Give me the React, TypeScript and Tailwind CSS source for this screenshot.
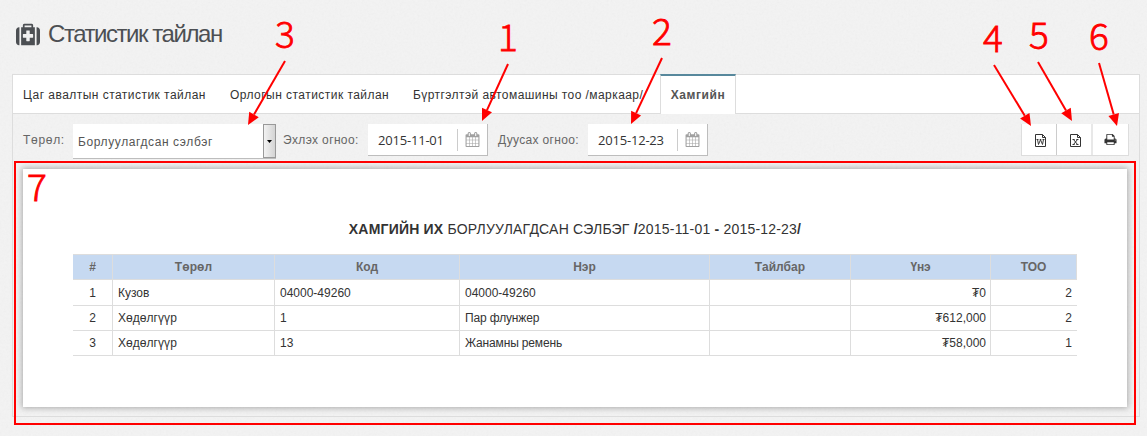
import React from 'react';

const ARIAL = "font-['Liberation_Sans',Arial,sans-serif]";
const OPEN = "font-['Open_Sans',sans-serif]";

function MedkitIcon() {
  return (
    <svg viewBox="0 0 1792 1792" preserveAspectRatio="none" className="h-[25px] w-[24px]" fill="#4c4f53" fillRule="evenodd">
      <path d="M1280 1088v-192q0-14-9-23t-23-9h-224v-224q0-14-9-23t-23-9h-192q-14 0-23 9t-9 23v224h-224q-14 0-23 9t-9 23v192q0 14 9 23t23 9h224v224q0 14 9 23t23 9h192q14 0 23-9t9-23v-224h224q14 0 23-9t9-23zm-640-704h512v-128h-512v128zm-384 0v1280h-32q-92 0-158-66t-66-158v-832q0-92 66-158t158-66h32zm1152 0v1280h-1024v-1280h128v-160q0-40 28-68t68-28h576q40 0 68 28t28 68v160h128zm384 224v832q0 92-66 158t-158 66h-32v-1280h32q92 0 158 66t66 158z" />
    </svg>
  );
}

function CalendarIcon() {
  return (
    <svg viewBox="0 0 1792 1792" className="h-[15px] w-[15px]" fill="#a1a1a1">
      <path d="M192 1664h288v-288h-288v288zM544 1664h320v-288h-320v288zM192 1312h288v-320h-288v320zM544 1312h320v-320h-320v320zM192 928h288v-288h-288v288zM928 1664h320v-288h-320v288zM544 928h320v-288h-320v288zM1312 1664h288v-288h-288v288zM928 1312h320v-320h-320v320zM576 448v-288q0-13-9.5-22.5t-22.5-9.5h-64q-13 0-22.5 9.5t-9.5 22.5v288q0 13 9.5 22.5t22.5 9.5h64q13 0 22.5-9.5t9.5-22.5zM1312 1312h288v-320h-288v320zM928 928h320v-288h-320v288zM1312 928h288v-288h-288v288zM1344 448v-288q0-13-9.5-22.5t-22.5-9.5h-64q-13 0-22.5 9.5t-9.5 22.5v288q0 13 9.5 22.5t22.5 9.5h64q13 0 22.5-9.5t9.5-22.5zM1728 384v1280q0 52-38 90t-90 38h-1408q-52 0-90-38t-38-90v-1280q0-52 38-90t90-38h128v-96q0-66 47-113t113-47h64q66 0 113 47t47 113v96h384v-96q0-66 47-113t113-47h64q66 0 113 47t47 113v96h128q52 0 90 38t38 90z" />
    </svg>
  );
}

function PrintIcon() {
  return (
    <svg viewBox="0 0 1792 1792" className="h-[13px] w-[13px]" fill="#333">
      <path d="M448 1536h896v-256h-896v256zm0-640h896v-384h-160q-40 0-68-28t-28-68v-160h-640v640zm1152 64q0-26-19-45t-45-19-45 19-19 45 19 45 45 19 45-19 19-45zm128 0v416q0 13-9.5 22.5t-22.5 9.5h-224v160q0 40-28 68t-68 28h-960q-40 0-68-28t-28-68v-160h-224q-13 0-22.5-9.5t-9.5-22.5v-416q0-79 56.5-135.5t135.5-56.5h64v-544q0-40 28-68t68-28h672q40 0 88 20t76 48l152 152q28 28 48 76t20 88v256h64q79 0 135.5 56.5t56.5 135.5z" />
    </svg>
  );
}

function FileIcon({ kind }: { kind: 'word' | 'excel' }) {
  return (
    <svg viewBox="0 0 11 13" className="h-[13px] w-[11px]" fill="none" stroke="#333" strokeWidth="1">
      <path d="M.5.5H7.5L10.5 3.5V12.5H.5ZM7.5.5V3.5H10.5" />
      {kind === 'word' ? (
        <path d="M1.500 5.500h2M4.700 5.500h1.600M7.500 5.500h2M2.500 5.500l1 5 2-4.800 2 4.800 1-5" strokeWidth=".95" />
      ) : (
        <path d="M2.500 5.500h2.200M6.300 5.500H8.500M2.500 10.500h2.200M6.300 10.500H8.500M3.500 5.500l4 5M7.500 5.500l-4 5" strokeWidth="1" />
      )}
    </svg>
  );
}

function Texture() {
  return (
    <svg className="absolute inset-0 -z-10 h-full w-full opacity-[0.06]">
      <filter id="grain">
        <feTurbulence type="fractalNoise" baseFrequency="0.45" numOctaves="2" seed="4" />
        <feColorMatrix type="saturate" values="0" />
      </filter>
      <rect width="100%" height="100%" filter="url(#grain)" />
    </svg>
  );
}

function DateField({ value }: { value: string }) {
  return (
    <div className="flex h-8 w-[120px] items-center border-r border-b border-[#bdbdbd] bg-white">
      <span className={`${OPEN} w-[89px] pt-px pl-[10px] text-[13px] leading-none tracking-[-0.2px] text-[#333]`}>{value}</span>
      <span className="mr-[7px] h-[22px] w-px bg-[#ccc]" />
      <CalendarIcon />
    </div>
  );
}

const columns = [
  { label: '#', width: 'w-[40px]', ls: '' },
  { label: 'Төрөл', width: 'w-[162px]', ls: 'tracking-[0.1px]' },
  { label: 'Код', width: 'w-[185px]', ls: '' },
  { label: 'Нэр', width: 'w-[250px]', ls: '' },
  { label: 'Тайлбар', width: 'w-[141px]', ls: 'tracking-[0.05px]' },
  { label: 'Үнэ', width: 'w-[140px]', ls: '-tracking-[0.2px]' },
  { label: 'ТОО', width: 'w-[86px]', ls: '' },
];

const rows = [
  ['1', 'Кузов', '04000-49260', '04000-49260', '', '₮0', '2'],
  ['2', 'Хөдөлгүүр', '1', 'Пар флунжер', '', '₮612,000', '2'],
  ['3', 'Хөдөлгүүр', '13', 'Жанамны ремень', '', '₮58,000', '1'],
];

const notes = [
  { n: '1', x: 498, y: 10, from: [508, 64], to: [482, 121] },
  { n: '2', x: 652, y: 4, from: [662, 58], to: [631, 124] },
  { n: '3', x: 275, y: 7, from: [285, 61], to: [248, 125] },
  { n: '4', x: 983, y: 11, from: [994, 65], to: [1031, 126] },
  { n: '5', x: 1029, y: 8, from: [1038, 62], to: [1072, 121] },
  { n: '6', x: 1089, y: 9, from: [1099, 63], to: [1117, 126] },
  { n: '7', x: 27, y: 160 },
];

function Arrow({ from, to }: { from: number[]; to: number[] }) {
  const dx = to[0] - from[0];
  const dy = to[1] - from[1];
  const len = Math.hypot(dx, dy);
  const ux = dx / len;
  const uy = dy / len;
  const bx = to[0] - ux * 12;
  const by = to[1] - uy * 12;
  return (
    <g>
      <line x1={from[0]} y1={from[1]} x2={bx} y2={by} stroke="red" strokeWidth="2" />
      <polygon
        fill="red"
        points={`${to[0]},${to[1]} ${bx - uy * 5.5},${by + ux * 5.5} ${bx + uy * 5.5},${by - ux * 5.5}`}
      />
    </g>
  );
}

function Annotations() {
  return (
    <div className="pointer-events-none absolute inset-0">
      <div className="absolute top-[161px] left-[14px] h-[264px] w-[1122px] border-2 border-[#f00]" />
      <svg className="absolute inset-0 h-full w-full">
        {notes.map((a) => (a.from && a.to ? <Arrow key={a.n} from={a.from} to={a.to} /> : null))}
      </svg>
      {notes.map((a) => (
        <span
          key={a.n}
          className="absolute font-['Noto_Sans_CJK_SC',sans-serif] text-[37px] leading-[50px] font-light text-[#f00] [-webkit-text-stroke:0.8px_#f00] [text-shadow:0_0_2px_#fff,0_0_2px_#fff]"
          style={{ left: a.x, top: a.y }}
        >
          {a.n}
        </span>
      ))}
    </div>
  );
}

export default function App() {
  return (
    <div className={`${ARIAL} relative isolate h-[436px] w-[1147px] overflow-hidden bg-[#f3f3f3] text-[12px] text-[#333]`}>
      <Texture />
      <header className="flex h-[74px] items-center pb-[6px] pl-4 text-[#4c4f53]">
        <MedkitIcon />
        <h1 className="ml-[8px] text-[24px] leading-8 tracking-[-1.45px]">Статистик тайлан</h1>
      </header>

      <main className="mx-3 h-[343px] w-[1128px] border border-[#ddd]">
        <nav className="flex h-[39px] border-b border-[#ddd] bg-white leading-[40px] whitespace-nowrap">
          <span className="w-[207px] pl-[10px] tracking-[0.46px]">Цаг авалтын статистик тайлан</span>
          <span className="w-[183px] pl-[10px] tracking-[0.46px]">Орлогын статистик тайлан</span>
          <span className="w-[257px] pl-[10px] tracking-[0.43px]">Бүртгэлтэй автомашины тоо /маркаар/</span>
          <span className="-mt-px h-10 w-[76px] border-x border-t-2 border-x-[#ddd] border-t-[#57889c] bg-white text-center leading-[38px] font-bold tracking-[0.55px] text-[#555]">
            Хамгийн
          </span>
        </nav>

        <div className="flex h-[55px] items-start pt-[10px] pl-[10px] text-[#666]">
          <span className="w-[50px] leading-8 tracking-[0.7px]">Төрөл:</span>
          <div className="flex h-[35px] w-[203px] border-b border-[#bdbdbd] bg-white">
            <span className="flex-1 pl-[5px] leading-[36px] tracking-[0.6px] text-[#555]">Борлуулагдсан сэлбэг</span>
            <span className="flex w-[13px] items-center justify-center border border-[#999] bg-linear-to-r from-[#f2f2f2] to-[#d4d4d4]">
              <svg viewBox="0 0 5 3" className="h-[3px] w-[5px]"><path d="M0 0h5L2.500 3z" /></svg>
            </span>
          </div>
          <span className="ml-[7px] w-[85px] leading-8 tracking-[0.36px] whitespace-nowrap">Эхлэх огноо:</span>
          <DateField value="2015-11-01" />
          <span className="ml-[10px] w-[90px] leading-8 tracking-[0.33px] whitespace-nowrap">Дуусах огноо:</span>
          <DateField value="2015-12-23" />
          <div className="ml-[313px] flex h-8 border border-t-0 border-[#ddd] bg-white">
            <span className="flex w-[35px] items-center justify-center border-r border-[#ccc] pt-px pl-[2px]"><FileIcon kind="word" /></span>
            <span className="flex w-[36px] items-center justify-center border-r-2 border-[#e8e8e8] pt-px pl-[2px]"><FileIcon kind="excel" /></span>
            <span className="flex w-[35px] items-center justify-center"><PrintIcon /></span>
          </div>
        </div>

        <section className="ml-[10px] h-[238px] w-[1104px] bg-white px-[50px] pt-[52px] shadow-[0_0_6px_1px_rgba(0,0,0,0.3)]">
          <h2 className="text-center text-[14px] leading-4 tracking-[0.2px]">
            <b>ХАМГИЙН ИХ</b> БОРЛУУЛАГДСАН СЭЛБЭГ <b>/</b>2015-11-01 <b>-</b> 2015-12-23<b>/</b>
          </h2>
          <table className="mt-[17px] w-[1004px] table-fixed border-separate border-spacing-0 leading-4">
            <thead>
              <tr className="h-[26px] bg-[#c6d9f1] text-[#666]">
                {columns.map((c) => (
                  <th key={c.label} className={`${c.width} ${c.ls} border-y border-r border-[#ddd] p-0`}>{c.label}</th>
                ))}
              </tr>
            </thead>
            <tbody>
              {rows.map((row, r) => (
                <tr key={r} className={r === 0 ? 'h-[26px]' : 'h-[25px]'}>
                  {row.map((cell, i) => (
                    <td
                      key={i}
                      className={`border-b border-[#ddd] py-0 ${i < 6 ? 'border-r px-1' : 'px-[5px]'} ${i === 0 ? 'text-center' : i > 4 ? 'text-right' : 'pl-[5px]'} ${i === 1 && r > 0 ? 'tracking-[0.05px]' : ''} ${i === 3 && r > 0 ? 'tracking-[-0.15px]' : ''}`}
                    >
                      {cell}
                    </td>
                  ))}
                </tr>
              ))}
            </tbody>
          </table>
        </section>
      </main>
      <Annotations />
    </div>
  );
}
